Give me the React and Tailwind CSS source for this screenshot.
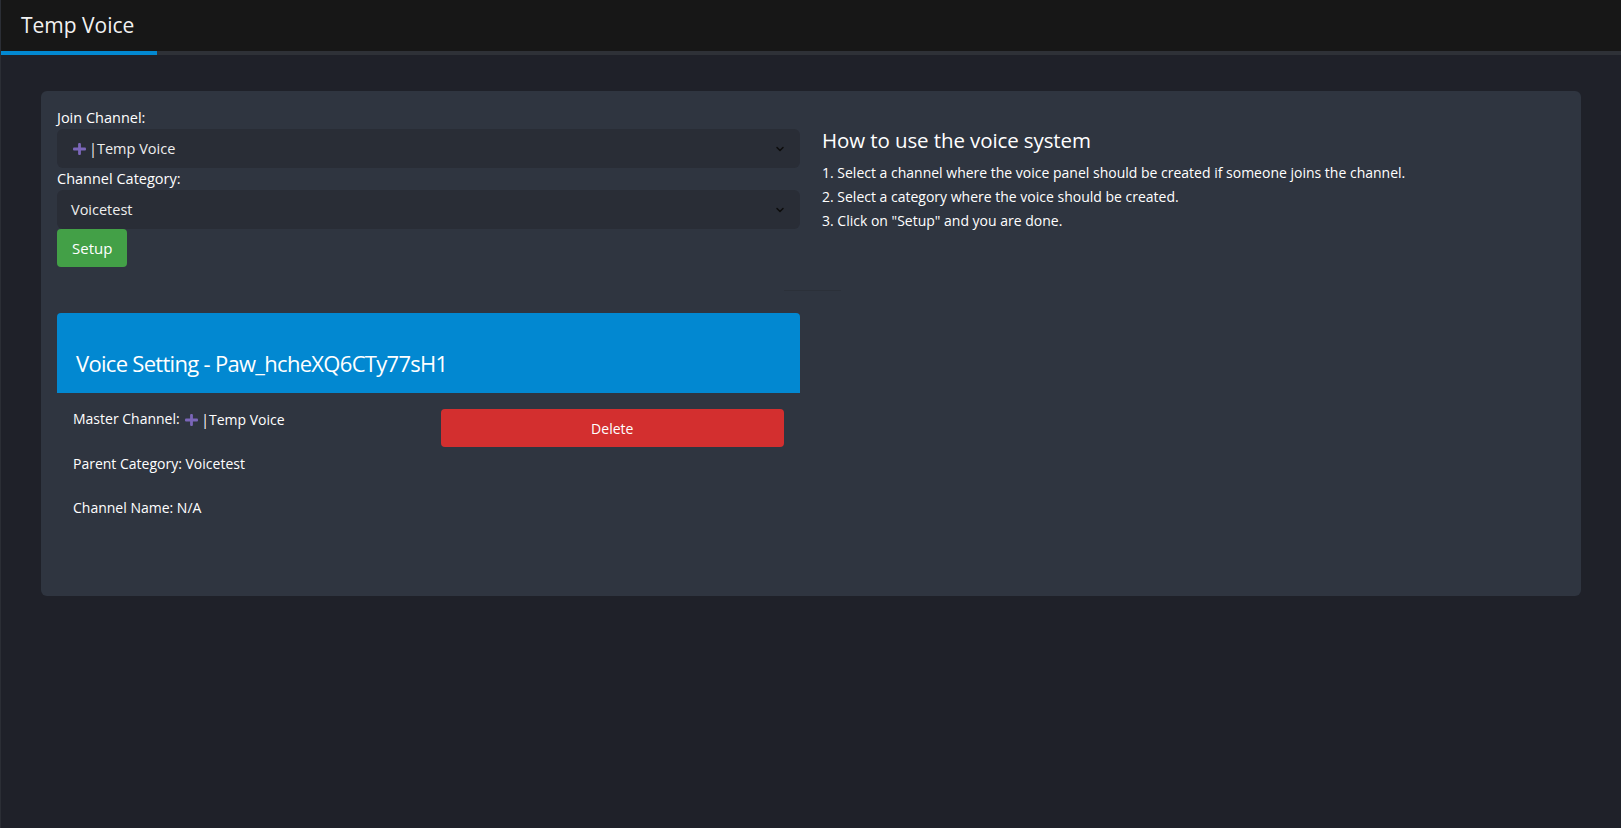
import { ChevronDown } from "lucide-react";

const FONT = { fontFamily: '"Open Sans", "Noto Sans", sans-serif' };

// purple heavy-plus glyph used in the channel name
function PlusMark() {
  return (
    <svg width="13" height="12" viewBox="0 0 13 12" className="inline-block shrink-0">
      <rect x="0" y="4.6" width="13" height="2.8" rx="1" fill="#7b66b9" />
      <rect x="5.1" y="0" width="2.8" height="12" rx="1" fill="#7b66b9" />
    </svg>
  );
}

function Select({ children }) {
  return (
    <div className="flex h-[39px] items-center justify-between rounded-md bg-[#292d36] pl-[14px] pr-[14px] text-[14.5px] text-[#eeeeee]">
      <div className="flex items-center">{children}</div>
      <ChevronDown size={12} strokeWidth={3} className="text-[#0d0d0d]" />
    </div>
  );
}

function ChannelName() {
  return (
    <span className="inline-flex items-center align-middle">
      <PlusMark />
      <span className="ml-[3px]">|Temp Voice</span>
    </span>
  );
}

export default function App() {
  return (
    <div style={FONT} className="min-h-screen border-l border-[#2b2e35] bg-[#1f2129] text-white">
      {/* Top bar */}
      <div className="flex h-[51px] items-center bg-[#171717] px-[20px]">
        <span className="text-[21px] text-[#f2f2f2]">Temp Voice</span>
      </div>
      <div className="flex h-[4px] bg-[#2e3137]">
        <div className="w-[156px] bg-[#0288d1]" />
      </div>

      <div className="px-[40px] pt-[36px]">
        <div className="h-[505px] rounded-md bg-[#2f3540] p-4">
          <div className="grid grid-cols-2 gap-[22px]">
            {/* Left column */}
            <div>
              <label className="block text-[14.5px] leading-[22px]">Join Channel:</label>
              <Select>
                <span className="ml-[2px]">
                  <ChannelName />
                </span>
              </Select>
              <label className="block text-[14.5px] leading-[22px]">Channel Category:</label>
              <Select>Voicetest</Select>
              <button className="h-[38px] rounded-[4px] bg-[#43a047] px-[15px] text-[15px] text-white">
                Setup
              </button>

              <div className="relative mt-[46px]">
                <div className="absolute -top-[23px] right-[-41px] h-px w-[57px] bg-[#2b3039]" />
                <div className="flex h-[80px] items-end rounded-t-[4px] bg-[#0288d1] px-[19px] pb-[14px]">
                  <h5 className="text-[22px] leading-[32px] tracking-[-0.7px]">
                    Voice Setting - Paw_hcheXQ6CTy77sH1
                  </h5>
                </div>
                <div className="grid grid-cols-2 gap-[24px] px-4 pt-4 text-[14px]">
                  <div className="space-y-[24px] leading-[20px]">
                    <p>
                      Master Channel: <span className="ml-[2px]"><ChannelName /></span>
                    </p>
                    <p>Parent Category: Voicetest</p>
                    <p>Channel Name: N/A</p>
                  </div>
                  <div>
                    <button className="h-[38px] w-full rounded-[4px] bg-[#d32f2f] text-[14px] text-white">
                      Delete
                    </button>
                  </div>
                </div>
              </div>
            </div>

            {/* Right column */}
            <div className="pt-[19px]">
              <h4 className="text-[20.5px] leading-[28px] tracking-[-0.1px]">How to use the voice system</h4>
              <div className="mt-[9px] space-y-[4px] text-[14px] leading-[20px]">
                <p>1. Select a channel where the voice panel should be created if someone joins the channel.</p>
                <p>2. Select a category where the voice should be created.</p>
                <p>3. Click on "Setup" and you are done.</p>
              </div>
            </div>
          </div>
        </div>
      </div>
    </div>
  );
}
